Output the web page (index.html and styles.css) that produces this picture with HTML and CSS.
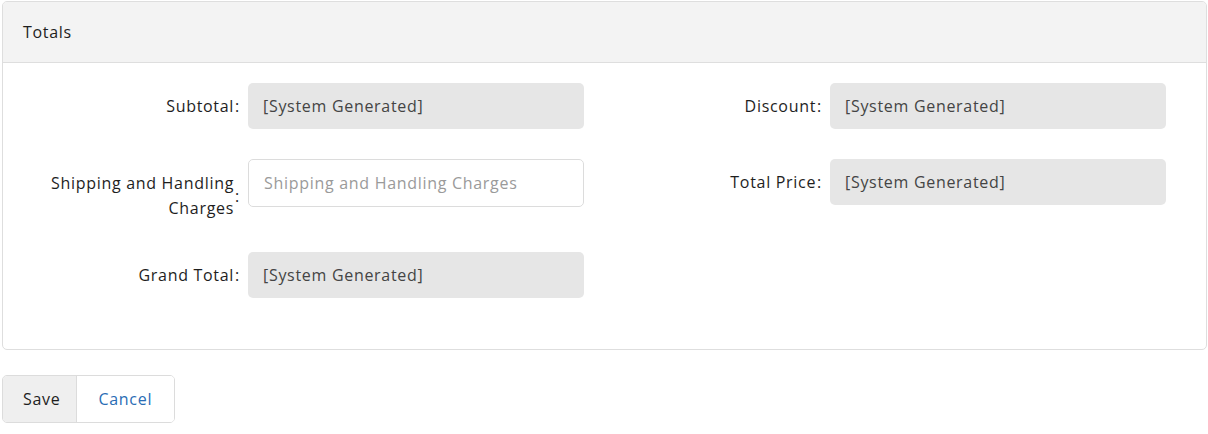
FILE: index.html
```html
<!DOCTYPE html>
<html lang="en">
<head>
  <meta charset="UTF-8"/>
  <meta name="viewport" content="width=device-width, initial-scale=1.0"/>
  <title>Totals</title>
  <link rel="stylesheet" href="styles.css">
</head>
<body>
  <div class="card">
    <div class="card-header">Totals</div>
    <div class="card-body">
      <div class="column">
        <div class="form-row">
          <label class="form-label"><span>Subtotal</span><span class="colon">:</span></label>
          <div class="form-control readonly">[System Generated]</div>
        </div>
        <div class="form-row">
          <label class="form-label tall"><span>Shipping and Handling Charges</span><span class="colon">:</span></label>
          <input class="form-control" type="text" placeholder="Shipping and Handling Charges">
        </div>
        <div class="form-row">
          <label class="form-label"><span>Grand Total</span><span class="colon">:</span></label>
          <div class="form-control readonly">[System Generated]</div>
        </div>
      </div>
      <div class="column">
        <div class="form-row">
          <label class="form-label"><span>Discount</span><span class="colon">:</span></label>
          <div class="form-control readonly">[System Generated]</div>
        </div>
        <div class="form-row">
          <label class="form-label"><span>Total Price</span><span class="colon">:</span></label>
          <div class="form-control readonly">[System Generated]</div>
        </div>
      </div>
    </div>
  </div>

  <div class="btn-group">
    <button class="btn btn-save">Save</button>
    <button class="btn btn-cancel">Cancel</button>
  </div>
</body>
</html>
```

FILE: styles.css
```css
* {
  margin: 0;
  padding: 0;
  box-sizing: border-box;
}
body {
  background: #fff;
  color: #1e1e1e;
  font-family: 'Open Sans', sans-serif;
  font-size: 16px;
  letter-spacing: 0.7px;
  padding: 1px 1px 0 2px;
}
.card {
  border: 1px solid #dedede;
  border-radius: 5px;
  overflow: hidden;
}
.card-header {
  background: #f3f3f3;
  border-bottom: 1px solid #dedede;
  height: 61px;
  line-height: 60px;
  padding-left: 20px;
}
.card-body {
  display: flex;
  padding: 20px 0 21px 37px;
}
.column {
  width: 582px;
}
.form-row {
  display: flex;
  align-items: flex-start;
  margin-bottom: 30px;
}
.form-label {
  width: 200px;
  min-height: 46px;
  margin-right: 8px;
  display: flex;
  align-items: center;
  justify-content: flex-end;
  text-align: right;
  line-height: 25px;
}
.form-label.tall {
  padding: 12px 0 1px;
}
.colon {
  margin-left: 1px;
}
.form-control {
  width: 336px;
  height: 46px;
  border-radius: 5px;
  padding: 0 15px;
  font: inherit;
  letter-spacing: inherit;
  line-height: 46px;
  color: #444;
}
.readonly {
  background: #e6e6e6;
}
input.form-control {
  height: 48px;
  border: 1px solid #dcdcdc;
  background: #fff;
  outline: none;
}
input.form-control::placeholder {
  color: #9a9a9a;
}
.btn-group {
  display: inline-flex;
  margin-top: 25px;
  border: 1px solid #dcdcdc;
  border-radius: 5px;
  overflow: hidden;
}
.btn {
  font: inherit;
  letter-spacing: inherit;
  border: none;
  height: 46px;
  cursor: pointer;
}
.btn-save {
  background: #efefef;
  color: #1e1e1e;
  border-right: 1px solid #dcdcdc;
  padding: 0 16px 0 20px;
}
.btn-cancel {
  background: #fff;
  color: #2a6db5;
  padding: 0 22px 0 21px;
}
```
